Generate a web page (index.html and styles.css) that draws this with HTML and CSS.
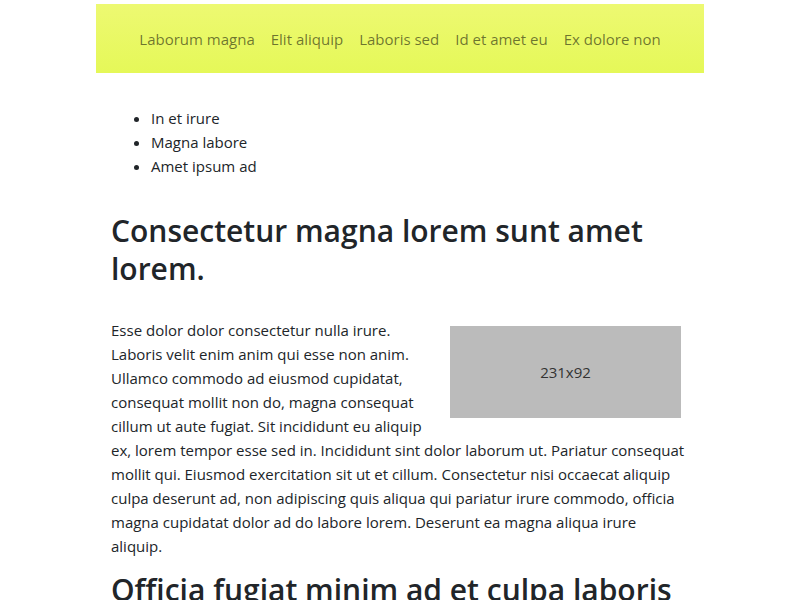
FILE: index.html
```html
<!DOCTYPE html>
<html>
<head>
<meta charset="utf-8">
<link rel="stylesheet" href="styles.css">
</head>
<body>
<div class="page">
  <header class="topbar">
    <nav class="nav">
      <a class="nav-link" href="#">Laborum magna</a>
      <a class="nav-link" href="#">Elit aliquip</a>
      <a class="nav-link" href="#">Laboris sed</a>
      <a class="nav-link" href="#">Id et amet eu</a>
      <a class="nav-link" href="#">Ex dolore non</a>
    </nav>
  </header>
  <main class="content">
    <ul class="list">
      <li>In et irure</li>
      <li>Magna labore</li>
      <li>Amet ipsum ad</li>
    </ul>
    <h1 class="title">Consectetur magna lorem sunt amet lorem.</h1>
    <section class="article">
      <div class="placeholder">231x92</div>
      <p class="text">Esse dolor dolor consectetur nulla irure. Laboris velit enim anim qui esse non anim. Ullamco commodo ad eiusmod cupidatat, consequat mollit non do, magna consequat cillum ut aute fugiat. Sit incididunt eu aliquip ex, lorem tempor esse sed in. Incididunt sint dolor laborum ut. Pariatur consequat mollit qui. Eiusmod exercitation sit ut et cillum. Consectetur nisi occaecat aliquip culpa deserunt ad, non adipiscing quis aliqua qui pariatur irure commodo, officia magna cupidatat dolor ad do labore lorem. Deserunt ea magna aliqua irure aliquip.</p>
    </section>
    <h2 class="title second">Officia fugiat minim ad et culpa laboris</h2>
  </main>
</div>
</body>
</html>
```
FILE: styles.css
```css
html, body { margin: 0; padding: 0; background: #fff; }
body {
  font-family: "Open Sans", "Noto Sans", sans-serif;
  font-size: 15px;
  line-height: 24px;
  color: #212529;
}
.page {
  width: 608px;
  margin: 0 auto;
}
.topbar {
  margin-top: 4px;
  height: 69px;
  background: linear-gradient(#edf972, #e5f858);
  display: flex;
  align-items: center;
  justify-content: center;
}
.nav {
  display: flex;
}
.nav-link {
  color: rgba(0, 0, 0, 0.54);
  text-decoration: none;
  padding: 0 8px;
  font-size: 15px;
  line-height: 24px;
}
.content {
  padding: 0 15px;
  overflow: hidden;
}
.list {
  margin: 33px 0 0;
  padding-left: 40px;
}
.title {
  font-size: 30px;
  line-height: 38px;
  font-weight: 600;
  margin: 34px 0 0;
  color: #212529;
}
.article {
  margin-top: 30px;
  display: flow-root;
}
.text {
  margin: 0;
}
.placeholder {
  float: right;
  width: 231px;
  height: 92px;
  margin: 8px;
  background: #bbbbbb;
  color: #333;
  display: flex;
  align-items: center;
  justify-content: center;
  font-size: 15px;
}
.second {
  margin-top: 13px;
}
```
